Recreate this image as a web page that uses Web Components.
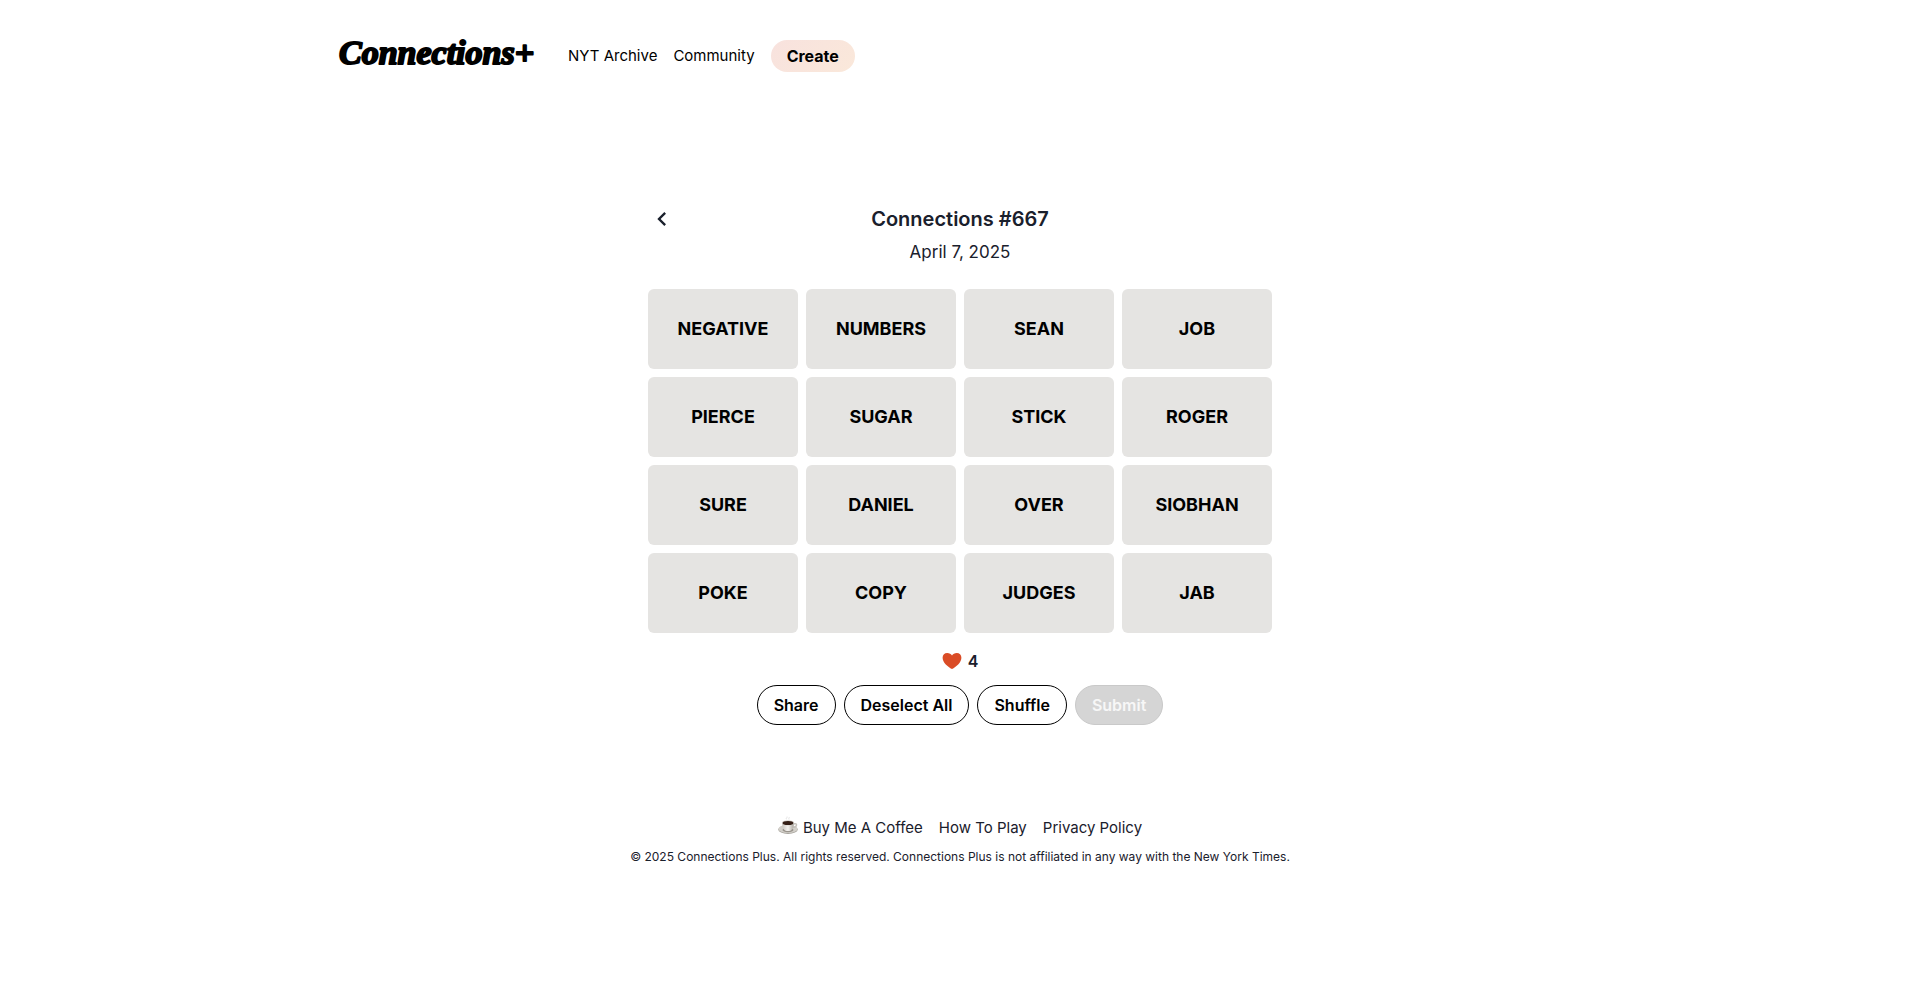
<!DOCTYPE html>
<html lang="en">
<head>
<meta charset="utf-8">
<meta name="viewport" content="width=device-width, initial-scale=1">
<title>Connections #667</title>
<style>
  body { margin: 0; background: #fff; color: #1a202c; font: 15px/24px Inter, "Liberation Sans", sans-serif; }
</style>
</head>
<body>
<connections-app></connections-app>
<script>
class BaseElement extends HTMLElement {
  constructor() {
    super();
    this.attachShadow({ mode: "open" });
  }
  render(html) {
    this.shadowRoot.innerHTML = "<style>*, *::before { box-sizing: border-box; }</style>" + html;
  }
}

customElements.define("site-header", class extends BaseElement {
  connectedCallback() {
    this.render(`
      <style>
        :host { display: block; }
        header { max-width: 1280px; margin: 0 auto; padding: 32px 16px; display: flex; align-items: center; gap: 32px; }
        a { color: #000; text-decoration: none; }
        .logo svg { display: block; }
        .logo text { font: italic bold 34px "Liberation Serif", serif; fill: #000; stroke: #000; stroke-width: 2px; stroke-linejoin: round; }
        nav { display: flex; align-items: center; gap: 16px; }
        .create { font-size: 16px; font-weight: 700; line-height: 32px; padding: 0 16px; border-radius: 16px; background: linear-gradient(135deg, #f8e2de, #fae8da); }
      </style>
      <header>
        <a class="logo" href="#"><svg width="200" height="48" viewBox="0 0 200 48"><text x="3" y="32">Connections+</text></svg></a>
        <nav>
          <a href="#archive">NYT Archive</a>
          <a href="#community">Community</a>
          <a class="create" href="#create">Create</a>
        </nav>
      </header>`);
  }
});

customElements.define("puzzle-heading", class extends BaseElement {
  connectedCallback() {
    this.render(`
      <style>
        :host { display: grid; grid-template-columns: 28px 1fr 28px; align-items: center; text-align: center; row-gap: 4px; }
        a { display: flex; justify-content: center; color: inherit; }
        h1 { margin: 0; font-size: 20px; line-height: 30px; font-weight: 600; }
        p { margin: 0; grid-column: 2; font-size: 17px; line-height: 28px; }
      </style>
      <a href="#previous" aria-label="Previous puzzle"><svg width="28" height="28" viewBox="0 0 24 24" fill="currentColor"><path d="M15.41 7.41 14 6l-6 6 6 6 1.41-1.41L10.83 12z"/></svg></a>
      <h1><slot name="title"></slot></h1>
      <p><slot name="date"></slot></p>`);
  }
});

customElements.define("word-tile", class extends BaseElement {
  connectedCallback() {
    this.render(`
      <style>
        :host { display: block; }
        button { width: 100%; height: 80px; padding: 0; border: 0; border-radius: 6px; background: #e5e4e2; color: #000; font: 700 18px/28px Inter, "Liberation Sans", sans-serif; cursor: pointer; }
      </style>
      <button type="button"><slot></slot></button>`);
  }
});

customElements.define("word-board", class extends BaseElement {
  connectedCallback() {
    this.render(`
      <style>
        :host { display: grid; grid-template-columns: repeat(4, 1fr); gap: 8px; }
      </style>
      <slot></slot>`);
  }
});

customElements.define("lives-left", class extends BaseElement {
  connectedCallback() {
    this.render(`
      <style>
        :host { display: flex; justify-content: center; align-items: center; gap: 6px; font-size: 16px; font-weight: 600; }
        svg { display: block; }
      </style>
      <svg width="20" height="18" viewBox="0 0 20 18" aria-hidden="true"><path fill="#da4c26" d="M10 17C6 15 .6 10.500.6 5.700.6 3 2.600 1 5.200 1 7.300 1 9.200 2.200 10 3.400 10.800 2.200 12.700 1 14.800 1 17.400 1 19.400 3 19.400 5.700 19.400 10.500 14 15 10 17Z"/></svg>
      <span><slot></slot></span>`);
  }
});

customElements.define("pill-button", class extends BaseElement {
  connectedCallback() {
    this.render(`
      <style>
        :host { display: block; }
        button { height: 40px; padding: 0 16px; border: 1px solid #000; border-radius: 20px; background: #fff; color: #000; font: 600 16px/24px Inter, "Liberation Sans", sans-serif; cursor: pointer; }
        button:disabled { background: #d5d5d5; border-color: #c9c9c9; color: #f7f7f7; cursor: default; }
      </style>
      <button type="button"${this.hasAttribute("disabled") ? " disabled" : ""}><slot></slot></button>`);
  }
});

customElements.define("site-footer", class extends BaseElement {
  connectedCallback() {
    this.render(`
      <style>
        :host { display: block; text-align: center; }
        nav { display: flex; flex-wrap: wrap; justify-content: center; gap: 16px; }
        a { display: flex; align-items: center; gap: 5px; color: inherit; text-decoration: none; }
        svg { display: block; }
        p { margin: 8px 0 0; font-size: 12px; line-height: 18px; }
      </style>
      <nav>
        <a href="#coffee"><svg width="20" height="24" viewBox="0 0 20 24" aria-hidden="true">
          <defs><linearGradient id="cup" x1="0" x2="1"><stop offset="0" stop-color="#c9c5bf"/><stop offset=".5" stop-color="#f4f2ef"/><stop offset="1" stop-color="#aaa59d"/></linearGradient></defs>
          <path d="M9 3.500c-2-1.500 1-2 0-3M11 3.500c-1-1 1-1.500 0-2.500" fill="none" stroke="#e4e4e4"/>
          <ellipse cx="10" cy="13.500" rx="9.800" ry="4.400" fill="#a8a49d"/>
          <ellipse cx="10" cy="12.900" rx="9.600" ry="4" fill="#d3d0ca"/>
          <ellipse cx="10" cy="14" rx="5.500" ry="2.200" fill="#99948c"/>
          <path d="M15.500 8c4.500-1.500 4 3.500-1 3.600" fill="none" stroke="#c4c0ba" stroke-width="1.400"/>
          <path d="M4 7c0 4 2 7.500 4 7.900h4c2-.4 4-3.900 4-7.900z" fill="url(#cup)"/>
          <ellipse cx="10" cy="6.900" rx="6.200" ry="2.600" fill="#d8d4ce"/>
          <ellipse cx="10" cy="7.100" rx="5.400" ry="2" fill="#352017"/>
        </svg>Buy Me A Coffee</a>
        <a href="#how-to-play">How To Play</a>
        <a href="#privacy">Privacy Policy</a>
      </nav>
      <p>© 2025 Connections Plus. All rights reserved. Connections Plus is not affiliated in any way with the New York Times.</p>`);
  }
});

customElements.define("connections-app", class extends BaseElement {
  connectedCallback() {
    const words = ["NEGATIVE", "NUMBERS", "SEAN", "JOB", "PIERCE", "SUGAR", "STICK", "ROGER",
      "SURE", "DANIEL", "OVER", "SIOBHAN", "POKE", "COPY", "JUDGES", "JAB"];
    this.render(`
      <style>
        :host { display: block; }
        main { max-width: 624px; margin: 0 auto; padding: 92px 0 91px; }
        word-board { margin-top: 23px; }
        lives-left { margin: 16px 0 12px; }
        .actions { display: flex; flex-wrap: wrap; justify-content: center; gap: 8px; }
      </style>
      <site-header></site-header>
      <main>
        <puzzle-heading>
          <span slot="title">Connections #667</span>
          <span slot="date">April 7, 2025</span>
        </puzzle-heading>
        <word-board>${words.map(w => `<word-tile>${w}</word-tile>`).join("")}</word-board>
        <lives-left>4</lives-left>
        <div class="actions">
          <pill-button>Share</pill-button>
          <pill-button>Deselect All</pill-button>
          <pill-button>Shuffle</pill-button>
          <pill-button disabled>Submit</pill-button>
        </div>
      </main>
      <site-footer></site-footer>`);
  }
});
</script>
</body>
</html>
